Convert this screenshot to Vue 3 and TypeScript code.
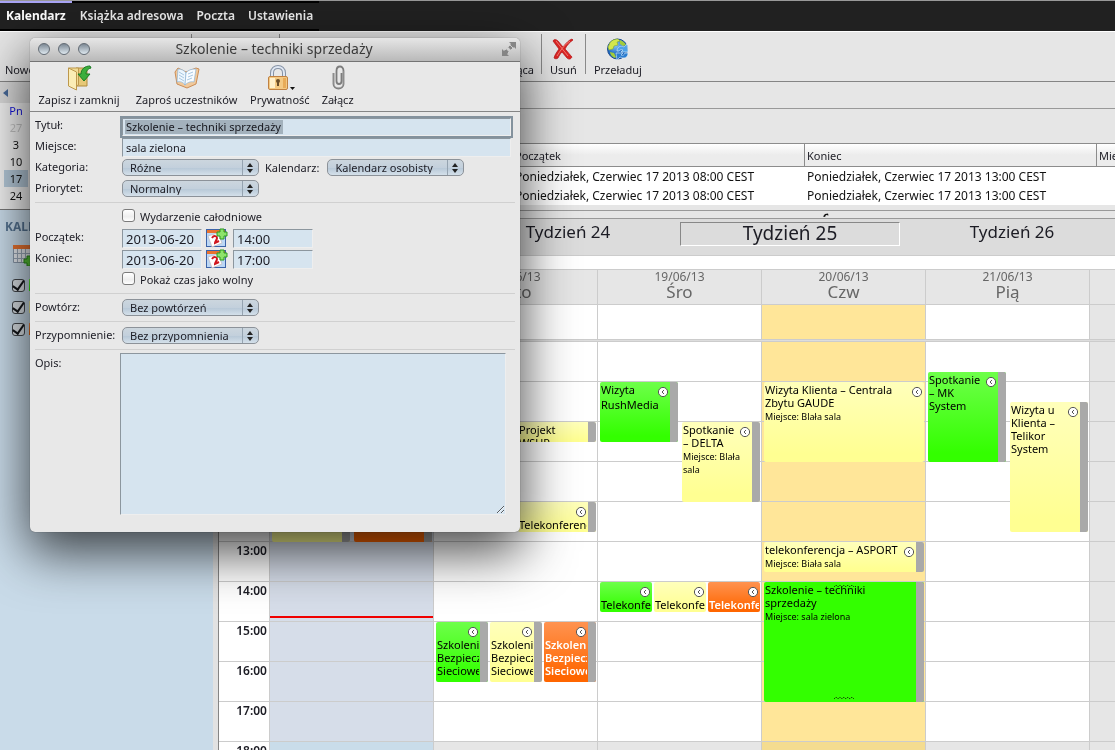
<script setup lang="ts">
import { ref } from 'vue'

interface CalEvent {
  title: string
  place?: string
  start: number
  end: number
  slot: number
  slots: number
  tone: 'green' | 'yellow' | 'orange'
  bar: boolean
  clock: boolean
  resizable?: boolean
}
interface Day {
  date: string
  name: string
  kind: '' | 'current' | 'chosen' | 'weekend'
  events: CalEvent[]
}

const ev = (
  title: string, start: number, end: number, slot: number, slots: number,
  tone: CalEvent['tone'], extra: Partial<CalEvent> = {},
): CalEvent => ({ title, start, end, slot, slots, tone, bar: true, clock: true, ...extra })

const security = 'Szkolenie Bezpieczeństwo Sieciowe'
const days: Day[] = [
  { date: '17/06/13', name: 'Pon', kind: 'current', events: [
    ev('', 12, 13, 0, 2, 'yellow', { clock: false }),
    ev('', 12, 13, 1, 2, 'orange', { clock: false }),
  ] },
  { date: '18/06/13', name: 'Wto', kind: '', events: [
    ev('Projekt WSUP', 10, 10.5, 1, 2, 'yellow', { clock: false }),
    ev('Telekonferencja', 12, 12.75, 1, 2, 'yellow'),
    ev(security, 15, 16.5, 0, 3, 'green'),
    ev(security, 15, 16.5, 1, 3, 'yellow'),
    ev(security, 15, 16.5, 2, 3, 'orange'),
  ] },
  { date: '19/06/13', name: 'Śro', kind: '', events: [
    ev('Wizyta RushMedia', 9, 10.5, 0, 2, 'green'),
    ev('Spotkanie – DELTA', 10, 12, 1, 2, 'yellow', { place: 'Blała sala' }),
    ev('Telekonferencja', 14, 14.75, 0, 3, 'green', { bar: false }),
    ev('Telekonferencja', 14, 14.75, 1, 3, 'yellow', { bar: false }),
    ev('Telekonferencja', 14, 14.75, 2, 3, 'orange', { bar: false }),
  ] },
  { date: '20/06/13', name: 'Czw', kind: 'chosen', events: [
    ev('Wizyta Klienta – Centrala Zbytu GAUDE', 9, 11, 0, 1, 'yellow', { place: 'Blała sala', bar: false }),
    ev('telekonferencja – ASPORT', 13, 13.75, 0, 1, 'yellow', { place: 'Biała sala' }),
    ev('Szkolenie – techniki sprzedaży', 14, 17, 0, 1, 'green', { place: 'sala zielona', clock: false, resizable: true }),
  ] },
  { date: '21/06/13', name: 'Pią', kind: '', events: [
    ev('Spotkanie – MK System', 8.75, 11, 0, 2, 'green'),
    ev('Wizyta u Klienta – Telikor System', 9.5, 12.75, 1, 2, 'yellow'),
  ] },
  { date: '', name: '', kind: 'weekend', events: [] },
]

const hours = [8, 9, 10, 11, 12, 13, 14, 15, 16, 17, 18]
const weeks = ['Tydzień 24', 'Tydzień 25', 'Tydzień 26']
const miniDays = ['27', '3', '10', '17', '24']
const rows = [0, 1].map(() => ({
  start: 'Poniedziałek, Czerwiec 17 2013 08:00 CEST',
  end: 'Poniedziałek, Czerwiec 17 2013 13:00 CEST',
}))

const place = (e: CalEvent) => {
  const gap = e.slots === 3 ? 2 : 4
  return {
    top: `${(e.start - 8) * 40 + 1}px`,
    height: `${(e.end - e.start) * 40}px`,
    left: `calc((100% + ${gap}px) * ${e.slot} / ${e.slots})`,
    width: `calc((100% + ${gap}px) / ${e.slots} - ${gap}px)`,
  }
}

const title = ref('Szkolenie – techniki sprzedaży')
const location = ref('sala zielona')
const calendars = ref([true, true, true])
</script>

<template>
  <div class="app">
    <nav class="top">
      <div class="links">
        <a href="#" class="on">Kalendarz</a>
        <a href="#">Książka adresowa</a>
        <a href="#">Poczta</a>
        <a href="#">Ustawienia</a>
      </div>
    </nav>

    <div class="toolbar">
      <button class="tool first" type="button">Nowe</button>
      <span class="divider d1"></span>
      <span class="divider d2"></span>
      <button class="tool month" type="button">Bieżąca</button>
      <span class="divider"></span>
      <button class="tool" type="button">
        <svg width="24" height="24" viewBox="0 0 24 24">
          <path d="M2 4c1-2 3-2 5 0l5 6c3-4 6-7 9-8l1 1c-3 2-6 5-8 9 3 3 5 6 7 8-1 2-3 3-5 1l-5-6c-2 2-3 4-4 6-1 1-3 1-4 0 1-4 3-6 5-9L2 4z" fill="#dc2423" stroke="#b21216" stroke-width=".7" />
          <path d="M5 4l12 15M19 4C13 8 9 14 6 19" fill="none" stroke="#f47a72" />
        </svg>
        Usuń
      </button>
      <span class="divider"></span>
      <button class="tool" type="button">
        <svg width="24" height="24" viewBox="0 0 24 24">
          <defs>
            <radialGradient id="globe" cx=".4" cy=".3"><stop offset="0" stop-color="#8cc8fa" /><stop offset="1" stop-color="#1764bd" /></radialGradient>
          </defs>
          <circle cx="11.500" cy="12" r="10" fill="url(#globe)" stroke="#1e4d93" />
          <path d="M3 8c1-4 5-6 9-6l2 2-3 1 1 3-4 1-1 3-4 1-1-3z" fill="#d3e64c" stroke="#7fa82b" stroke-width=".6" />
          <path d="M14 3c3 1 5 3 6 5l-3 1-3-2zM4 15l4 1 2 4-1 1c-3-1-5-4-5-6z" fill="#a3cc3a" />
          <path d="M11 14c0-4 4-6 7-4l3-3 1 8h-7l2-2c-2-1-3 0-4 1z" fill="#4ca1e8" stroke="#dff0fc" stroke-width=".6" />
          <path d="M22 16c0 5-4 6-8 4l-3 3-1-7h7l-2 2c2 1 3 0 4-2z" fill="#2b7dd0" stroke="#dff0fc" stroke-width=".6" />
        </svg>
        Przeładuj
      </button>
    </div>

    <div class="columns">
      <aside>
        <div class="mini">
          <div class="mini-head"><svg width="5" height="8" viewBox="0 0 5 8"><path d="M5 0v8L0 4z" fill="#486a99" /></svg></div>
          <table>
            <thead><tr><th>Pn</th></tr></thead>
            <tbody>
              <tr v-for="d in miniDays" :key="d"><td :class="{ faded: d === '27', picked: d === '17' }">{{ d }}</td></tr>
            </tbody>
          </table>
        </div>
        <div class="cals">
          <h2>KALENDARZE</h2>
          <svg class="cal-icon" width="22" height="22" viewBox="0 0 22 22">
            <path d="M.5 1.500h19v17H.5z" fill="#e9edf2" stroke="#8a99ab" />
            <path d="M0 1h20v4H0z" fill="#ec7430" />
            <path d="M4.500 5v13M8.500 5v13M12.500 5v13M1 9.500h18M1 14.500h18" stroke="#9aa8b8" />
            <path d="M14 12h4v3h3v4h-3v3h-4v-3h-3v-4h3z" fill="#57c637" stroke="#2c8c1c" />
          </svg>
          <label v-for="(c, i) in calendars" :key="i">
            <input v-model="calendars[i]" type="checkbox" :aria-label="'Kalendarz ' + (i + 1)">
            <span :class="['swatch', ['green', 'yellow', 'orange'][i]]"></span>
          </label>
        </div>
      </aside>
      <div class="splitter"></div>

      <main>
        <div class="strip"></div>
        <div class="filter"></div>
        <table class="list">
          <colgroup><col class="c-title"><col class="c-date"><col class="c-date"><col></colgroup>
          <thead><tr><th></th><th>Początek</th><th>Koniec</th><th>Miejsce</th></tr></thead>
          <tbody>
            <tr v-for="(r, i) in rows" :key="i"><td></td><td>{{ r.start }}</td><td>{{ r.end }}</td><td></td></tr>
          </tbody>
        </table>
        <div class="grip">
          <svg width="6" height="4" viewBox="0 0 6 4"><path d="M0 3.500L2 1l3-.5.5 2L3 2 2 4z" fill="#111" /></svg>
        </div>
        <div class="weeks">
          <button v-for="w in weeks" :key="w" type="button" :class="{ now: w === 'Tydzień 25' }">{{ w }}</button>
        </div>

        <section class="week">
          <div class="row head">
            <div></div>
            <div v-for="(d, i) in days" :key="i" class="dayname"><span>{{ d.date }}</span><b>{{ d.name }}</b></div>
          </div>
          <div class="row allday">
            <div></div>
            <div v-for="(d, i) in days" :key="i" :class="['cell', d.kind]"></div>
          </div>
          <div class="row grid">
            <div class="times"><div v-for="h in hours" :key="h">{{ h }}:00</div></div>
            <div v-for="(d, i) in days" :key="i" :class="['day', d.kind]">
              <div v-for="h in hours" :key="h" :class="['hour', { off: h > 17 }]"></div>
              <div v-if="d.kind === 'current'" class="nowline"></div>
              <div class="events">
                <article v-for="(e, n) in d.events" :key="n" :class="['event', e.tone, { busy: e.bar, solid: e.resizable }]" :style="place(e)">
                  <div class="text">
                    <svg v-if="e.clock" class="clock" width="12" height="12" viewBox="0 0 12 12">
                      <circle cx="6" cy="6" r="4.600" fill="#fff" stroke="#555" />
                      <path d="M7 4L5 6l2 2" fill="none" stroke="#555" />
                    </svg>
                    {{ e.title }}
                    <small v-if="e.place">Miejsce: {{ e.place }}</small>
                  </div>
                  <template v-if="e.resizable">
                    <svg v-for="edge in ['upper', 'lower']" :key="edge" :class="['handle', edge]" width="20" height="3" viewBox="0 0 20 3">
                      <path d="M0 2l2-2 2 2 2-2 2 2 2-2 2 2 2-2 2 2 2-2 2 2" fill="none" stroke="#174d08" stroke-dasharray="2 1" />
                    </svg>
                  </template>
                </article>
              </div>
            </div>
          </div>
        </section>
      </main>
    </div>

    <div class="window" role="dialog" aria-labelledby="wtitle">
      <header>
        <button type="button" class="dot" aria-label="Zamknij"></button>
        <button type="button" class="dot" aria-label="Minimalizuj"></button>
        <button type="button" class="dot" aria-label="Powiększ"></button>
        <h1 id="wtitle">Szkolenie – techniki sprzedaży</h1>
        <svg width="14" height="14" viewBox="0 0 14 14">
          <path d="M7 0h7v7l-2-2-3 3-3-3 3-3zM7 14H0V7l2 2 2-2 3 3-2 2z" fill="#858585" />
          <path d="M3 8l5-5 3 3-5 5" fill="none" stroke="#cfcfcf" />
        </svg>
      </header>
      <div class="wtools">
        <button type="button" class="save">
          <svg width="26" height="26" viewBox="0 0 26 26">
            <path d="M10 3h11v18H10z" fill="#e6c878" stroke="#b08a3a" />
            <path d="M2.500 3h10v17l-3 1v-1h-7z" fill="#f1dc96" stroke="#bd984c" />
            <path d="M2.500 3l8 4v18l-8-4z" fill="#fbedb5" stroke="#bd984c" />
            <path d="M24 1l1 2c-4 1-5 4-5 6h4l-6 7-6-7h3c0-5 4-8 9-8z" fill="#3cae3c" stroke="#197a23" />
          </svg>
          Zapisz i zamknij
        </button>
        <button type="button" class="invite">
          <svg width="26" height="26" viewBox="0 0 26 26">
            <path d="M4 3l8 4 10-4 3 1-3 15-9 4-10-4L1 7z" fill="#f1c99b" stroke="#ca8d57" />
            <path d="M4 4c3 0 6 1 8 4l-1 12c-2-3-5-4-8-3z" fill="#edf6fd" stroke="#8cb4d7" stroke-width=".7" />
            <path d="M12 8c2-3 5-4 10-4l-2 13c-4-1-7 1-9 3z" fill="#f9fcff" stroke="#8cb4d7" stroke-width=".7" />
            <path d="M5 7l5 3M5 10l5 3M5 13l5 3M14 9l5-2M14 12l5-2M13 15l5-2" stroke="#a9c8e2" />
          </svg>
          Zaproś uczestników
        </button>
        <button type="button" class="privacy">
          <svg width="30" height="26" viewBox="0 0 30 26">
            <path d="M7 14V8c0-8 12-8 12 0v6" fill="none" stroke="#8793a5" stroke-width="4" />
            <path d="M7 14V8c0-8 12-8 12 0v6" fill="none" stroke="#dfe7f3" stroke-width="2" />
            <rect x="3.500" y="11.500" width="19" height="13" rx="1.500" fill="#f4c983" stroke="#c08142" />
            <path d="M5 13h5v10H5z" fill="#fff0cc" /><path d="M18 13h3v10h-3z" fill="#e8ab58" />
            <circle cx="13" cy="16" r="2" fill="#6b4e2a" /><path d="M12 17h2v4h-2z" fill="#6b4e2a" />
            <path d="M25 22h5l-2.500 3z" fill="#111" />
          </svg>
          Prywatność
        </button>
        <button type="button" class="attach">
          <svg width="26" height="26" viewBox="0 0 26 26">
            <path d="M8.500 8v11c0 6 10 6 10 0V6c0-6-7-6-7 0v10c0 4 5 4 5 0V8" fill="none" stroke="#7c7c7c" stroke-width="1.800" />
            <path d="M9 8v11c0 5 9 5 9 0V6" fill="none" stroke="#b5b5b5" stroke-width=".6" />
          </svg>
          Załącz
        </button>
      </div>

      <form @submit.prevent>
        <div class="field"><label for="f-title">Tytuł:</label><input id="f-title" v-model="title" class="wide focus"><span class="selection" aria-hidden="true"></span></div>
        <div class="field"><label for="f-place">Miejsce:</label><input id="f-place" v-model="location" class="wide"></div>
        <div class="field">
          <label for="f-cat">Kategoria:</label>
          <span class="select"><select id="f-cat"><option>Różne</option></select><svg width="6" height="10" viewBox="0 0 6 10"><path d="M0 4l3-4 3 4zM0 6h6l-3 4z" /></svg></span>
          <label for="f-cal" class="inline">Kalendarz:</label>
          <span class="select"><select id="f-cal"><option>Kalendarz osobisty</option></select><svg width="6" height="10" viewBox="0 0 6 10"><path d="M0 4l3-4 3 4zM0 6h6l-3 4z" /></svg></span>
        </div>
        <div class="field">
          <label for="f-prio">Priorytet:</label>
          <span class="select"><select id="f-prio"><option>Normalny</option></select><svg width="6" height="10" viewBox="0 0 6 10"><path d="M0 4l3-4 3 4zM0 6h6l-3 4z" /></svg></span>
        </div>
        <hr>
        <div class="field check"><input id="f-all" type="checkbox"><label for="f-all">Wydarzenie całodniowe</label></div>
        <div v-for="t in [{ id: 'f-start', label: 'Początek:', hour: '14:00' }, { id: 'f-end', label: 'Koniec:', hour: '17:00' }]" :key="t.id" class="field">
          <label :for="t.id">{{ t.label }}</label>
          <input :id="t.id" class="num" value="2013-06-20">
          <button type="button" class="pick" aria-label="Wybierz datę">
            <svg width="22" height="20" viewBox="0 0 22 20">
              <rect x=".5" y="1.500" width="19" height="17" fill="#bcd7f5" stroke="#3c63a8" />
              <path d="M1 2h18v3H1z" fill="#e9722e" />
              <path d="M2 8l10-3 4 10-10 4z" fill="#fff" stroke="#c2b7b7" stroke-width=".7" />
              <path d="M6 10c2-3 5-2 5 0s-2 3-2 5l4-2" fill="none" stroke="#d0161e" stroke-width="2" />
              <path d="M14 1h4v3h3v4h-3v3h-4V8h-3V4h3z" fill="#8de36a" stroke="#2c9a20" />
            </svg>
          </button>
          <input class="num" :value="t.hour" :aria-label="t.label + ' godzina'">
        </div>
        <div class="field check"><input id="f-free" type="checkbox"><label for="f-free">Pokaż czas jako wolny</label></div>
        <hr>
        <div class="field">
          <label for="f-rep">Powtórz:</label>
          <span class="select"><select id="f-rep"><option>Bez powtórzeń</option></select><svg width="6" height="10" viewBox="0 0 6 10"><path d="M0 4l3-4 3 4zM0 6h6l-3 4z" /></svg></span>
        </div>
        <hr>
        <div class="field">
          <label for="f-rem">Przypomnienie:</label>
          <span class="select"><select id="f-rem"><option>Bez przypomnienia</option></select><svg width="6" height="10" viewBox="0 0 6 10"><path d="M0 4l3-4 3 4zM0 6h6l-3 4z" /></svg></span>
        </div>
        <hr>
        <div class="field desc"><label for="f-desc">Opis:</label><textarea id="f-desc"></textarea></div>
      </form>
    </div>
  </div>
</template>

<style>
body { margin: 0; overflow: hidden; }
</style>

<style scoped>
* { box-sizing: border-box; }
.app {
  position: relative; display: flex; flex-direction: column; height: 100vh; overflow: hidden;
  background: #e6e6e6; color: #1c1c24; font: 11px/13px "Noto Sans", "Open Sans", sans-serif;
}
button { padding: 0; border: 0; background: none; color: inherit; font: inherit; }
input, select, textarea { margin: 0; color: inherit; font: inherit; }
svg { display: block; flex: none; }

.top { display: flex; flex: none; height: 31px; background: #212121; border-top: 1px solid #999; }
.links { display: flex; gap: 13px; padding-right: 6px; border-bottom: 2px solid #000; background: linear-gradient(#000 2px, #212121 2px); }
.top a { color: #ececec; font-size: 12px; font-weight: 600; line-height: 26px; text-decoration: none; border-top: 2px solid #000; }
.top a.on { padding: 0 6px; margin-right: -5px; color: #fff; font-weight: 700; border-color: #a9a4f5; }

.toolbar { display: flex; flex: none; height: 51px; border-top: 1px solid #fff; border-bottom: 1px solid #858585; }
.tool { display: flex; flex-direction: column; align-items: center; justify-content: flex-end; gap: 2px; padding: 0 8px 5px; }
.tool.first { padding-left: 5px; width: 191px; align-items: flex-start; }
.tool.month { flex: none; width: 261px; align-items: flex-end; padding-right: 7px; }
.divider { width: 1px; height: 40px; margin-top: 2px; background: #8a8a8a; }
.divider.d2 { margin-left: 87px; }

.columns { display: flex; flex: 1; min-height: 0; }
aside { display: flex; flex-direction: column; flex: none; width: 213px; }
.mini { height: 128px; border-bottom: 1px solid #777; background: #f0f0f0; }
.mini-head { display: flex; align-items: center; height: 21px; padding-left: 3px; background: #d9d9d9; }
.mini table { border-spacing: 0; margin-left: 4px; }
.mini th, .mini td { width: 24px; height: 17px; padding: 0 0 1px; text-align: center; font-weight: 400; color: #111; }
.mini th { height: 16px; color: #1212d8; }
.mini td.faded { color: #c2c2c2; }
.mini td.picked { background: #b4c8d8; }
.cals { display: flex; flex: 1; flex-direction: column; align-items: flex-start; background: #c9dbe9; padding: 10px 0 0 5px; }
.cals h2 { margin: 0 0 10px; color: #557391; font-size: 12px; line-height: 14px; }
.cal-icon { margin: 0 0 8px 8px; }
.cals label { display: flex; align-items: center; height: 22px; margin-left: 7px; gap: 4px; }
.swatch { width: 12px; height: 12px; }
input[type=checkbox] {
  appearance: none; flex: none; width: 13px; height: 13px; border: 1px solid #7b7b7b; border-radius: 3px;
  background: linear-gradient(#fff, #eee 60%, #fff);
}
.cals input[type=checkbox]:checked {
  display: flex; justify-content: center; background: #dde3e8; border-color: #44484d;
}
.cals input[type=checkbox]:checked::before {
  content: ""; flex: none; width: 5px; height: 10px; margin-top: -2px; border: solid #15181c; border-width: 0 2px 2px 0; transform: rotate(35deg);
}
.splitter { flex: none; width: 6px; border-right: 1px solid #858585; background: #e2e2e2; }

main { display: flex; flex: 1; flex-direction: column; min-width: 0; overflow: hidden; }
.strip { flex: none; height: 27px; border-bottom: 1px solid #999; }
.filter { flex: none; height: 34px; }
.list { flex: none; width: 100%; table-layout: fixed; border-spacing: 0; background: #fff; }
.c-title { width: 293px; }
.c-date { width: 292px; }
.list th { height: 24px; padding: 0 2px; text-align: left; font-weight: 400; border: solid #8c8c8c; border-width: 1px 0 1px 1px; background: linear-gradient(#fff, #ececec 50%); overflow: hidden; white-space: nowrap; }
.list td { height: 19px; padding: 0 3px 1px; color: #111; font-size: 12px; white-space: nowrap; }
.grip { flex: none; display: grid; place-items: center; height: 9px; margin-top: 5px; padding-left: 318px; border-top: 1px solid #999; border-bottom: 1px solid #999; }
.weeks { flex: none; display: grid; grid-template-columns: repeat(3, minmax(220px, 1fr)); gap: 2px; height: 37px; padding: 3px 0 9px 239px; background: #dcdcdc; border-bottom: 1px solid #ccc; }
.weeks button { padding-bottom: 4px; font-size: 17px; line-height: 20px; }
.weeks .now { padding: 0 0 2px; font-size: 19px; border: 1px solid; border-color: #888 #fff #fff #888; }

.week { flex: 1; background: #fff; padding-top: 13px; }
.row { display: grid; grid-template-columns: 50px repeat(6, minmax(164px, 1fr)); }
.row > * + * { border-left: 1px solid #ccc; }
.head { height: 36px; border: solid #ccc; border-width: 1px 0; background: #e6e6e6; color: #666; }
.dayname { display: flex; flex-direction: column; align-items: center; }
.dayname span { font-size: 12px; line-height: 14px; }
.dayname b { font-size: 17px; line-height: 16px; font-weight: 400; }
.allday { height: 36px; border-bottom: 1px solid #ddd; }
.allday > div { border-bottom: 1px solid #ccc; }
.chosen { background: #ffe699; }
.weekend { background: #e6e6e6; }
.current { background: #d6dde9; }
.times div { height: 40px; padding: 2px 2px 0 0; border-top: 1px solid #ccc; text-align: right; font-size: 12px; font-weight: 600; }
.day { position: relative; }
.hour { height: 40px; border-top: 1px solid #ccc; }
.hour.off { background: #e6e6e6; }
.chosen .hour.off { background: #f4dc90; }
.current .hour.off { background: #c9dcea; }
.nowline { position: absolute; top: 275px; left: 0; right: 0; height: 2px; background: #f00000; }
.events { position: absolute; top: 0; bottom: 0; left: 2px; right: 1px; }
.event { position: absolute; display: flex; border-radius: 2px; overflow: hidden; color: #000; }
.green { background: linear-gradient(#6eff4a, #33ff00 90%); }
.yellow { background: linear-gradient(#ffffbb, #ffff92 90%); }
.orange { background: linear-gradient(#ff9350, #ff6600 90%); }
.event.orange { color: #fff; font-weight: 600; }
.event.solid { background: #33ff00; }
.event.busy::after { content: ""; flex: none; width: 8px; background: #a9a9a9; }
.text { flex: 1; min-width: 0; margin-right: 1px; padding: 1px 0 0 1px; overflow: hidden; }
.text small { display: block; margin-top: 1px; font-size: 9px; line-height: 13px; }
.clock { float: right; margin-top: 3px; }
.handle { position: absolute; left: calc(50% - 10px); }
.upper { top: 3px; }
.lower { bottom: 2px; }

.window {
  position: absolute; top: 38px; left: 30px; width: 490px; border-radius: 5px; background: #e8e8e8;
  box-shadow: 0 0 1px rgba(0, 0, 0, .6), 0 18px 52px 2px rgba(0, 0, 0, .72);
}
.window header { display: flex; align-items: center; gap: 8px; height: 24px; padding: 0 4px 2px 8px; border-bottom: 1px solid #747474; border-radius: 5px 5px 0 0; background: linear-gradient(#e6e6e6, #b9b9b9); }
.dot { width: 12px; height: 12px; border: 1px solid #636b74; border-radius: 50%; background: linear-gradient(#7c8894, #dfe9f0); }
.window h1 { flex: 1; margin: 0; padding-right: 44px; text-align: center; color: #3a3a3a; font-size: 14px; line-height: 18px; font-weight: 400; }
.wtools { display: flex; height: 50px; padding: 3px 5px; gap: 10px; border-bottom: 1px solid #858585; }
.wtools button { display: flex; flex-direction: column; align-items: center; gap: 2px; white-space: nowrap; }
.wtools .save { width: 88px; }
.wtools .invite { width: 107px; }
.wtools .attach { width: 36px; }

form { padding: 3px 5px 17px; }
.field { position: relative; display: flex; align-items: center; height: 21px; }
.field > label { flex: none; width: 87px; padding-bottom: 2px; white-space: nowrap; }
.field input:not([type=checkbox]), textarea { border: 1px solid; border-color: #8c969e #eee #eee #8c969e; border-radius: 0; background: #d6e4ef; outline: 0; }
.field input:not([type=checkbox]) { width: 80px; height: 19px; margin-top: 2px; padding: 0 3px; }
.field input.num { font-size: 13px; }
.field input.wide { flex: 1; margin-right: 4px; }
.field input.focus { position: relative; height: 18px; box-shadow: 0 0 0 2px #84929d; }
.selection { position: absolute; top: 5px; left: 90px; width: 158px; height: 14px; background: #99a0a5; mix-blend-mode: multiply; opacity: .6; }
.select { position: relative; width: 137px; height: 17px; }
.select select { appearance: none; display: block; width: 100%; height: 100%; padding: 0 20px 0 7px; border: 1px solid #8c9299; border-radius: 5px; background: linear-gradient(#ccd6de, #c3d0dc 50%, #b6c7d6 51%, #d4e0ea); }
.select svg { position: absolute; top: 4px; right: 6px; fill: #222; pointer-events: none; }
.select::after { content: ""; position: absolute; top: 1px; bottom: 1px; right: 16px; width: 1px; background: #95a3b0; }
.field > label.inline { width: auto; padding: 0 8px 0 6px; }
.field.check { padding: 0 0 2px 87px; }
.check label { padding: 2px 0 0 5px; width: auto; }
.pick { margin: 1px 5px 0 4px; }
hr { height: 1px; margin: 3px 0; border: 0; background: #d0d0d0; }
.field.desc { height: auto; align-items: flex-start; }
.desc label { padding-top: 3px; }
textarea { display: block; flex: 1; height: 162px; margin: 0 9px 0 -2px; resize: both; }
</style>
